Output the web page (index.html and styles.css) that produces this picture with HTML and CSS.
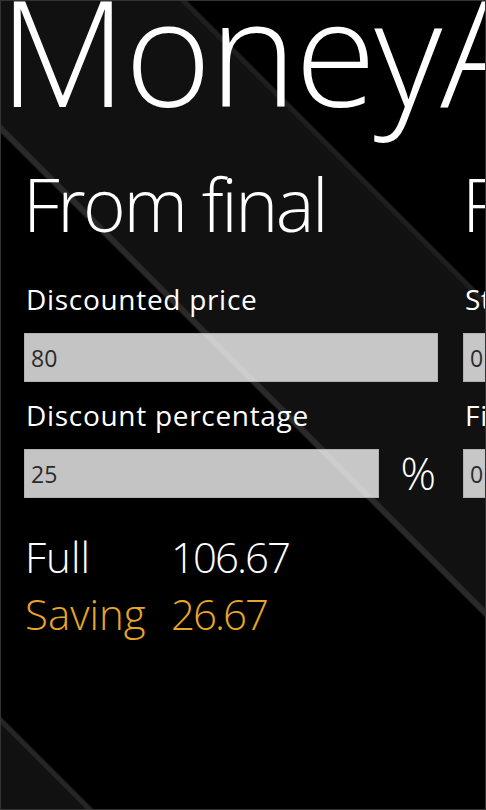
FILE: index.html
```html
<!DOCTYPE html>
<html lang="en">
<head>
<meta charset="utf-8">
<title>MoneyApp</title>
<link rel="stylesheet" href="styles.css">
</head>
<body>
<div class="screen">
  <h1 class="app-title">MoneyApp</h1>
  <div class="panorama">
    <section class="panel">
      <h2 class="panel-title">From final</h2>
      <label class="field-label" for="discounted">Discounted price</label>
      <div class="input-row">
        <input class="field-input" id="discounted" type="text" value="80">
      </div>
      <label class="field-label" for="percent">Discount percentage</label>
      <div class="input-row with-unit">
        <input class="field-input" id="percent" type="text" value="25">
        <span class="unit">%</span>
      </div>
      <div class="results">
        <span class="res-label">Full</span><span class="res-value">106.67</span>
        <span class="res-label accent">Saving</span><span class="res-value accent">26.67</span>
      </div>
    </section>
    <section class="panel">
      <h2 class="panel-title">From full</h2>
      <label class="field-label" for="start">Starting price</label>
      <div class="input-row">
        <input class="field-input" id="start" type="text" value="0">
      </div>
      <label class="field-label" for="final">Final price</label>
      <div class="input-row">
        <input class="field-input" id="final" type="text" value="0">
      </div>
    </section>
  </div>
</div>
</body>
</html>
```
FILE: styles.css
```css
* { box-sizing: border-box; }

html, body {
  margin: 0;
  padding: 0;
  background: #000;
}

.screen {
  width: 486px;
  height: 810px;
  overflow: hidden;
  border: 1px solid #333;
  color: #fff;
  font-family: "Open Sans", "Noto Sans", sans-serif;
  background: linear-gradient(45deg,
    #111 0px, #111 59px, #262626 61px, #262626 64px, #000 66px,
    #000 477px, #2a2a2a 479px, #2a2a2a 483px, #111 485px,
    #111 697px, #1f1f1f 699px, #1f1f1f 702px, #000 704px);
}

.app-title {
  margin: -25px 0 0 -2px;
  font-size: 148px;
  line-height: 148px;
  font-weight: 300;
  white-space: nowrap;
  letter-spacing: -2px;
}

.panorama {
  display: flex;
  gap: 25px;
  padding-left: 23px;
  margin-top: 40px;
}

.panel {
  flex: 0 0 414px;
}

.panel-title {
  margin: 0 0 0 -1px;
  font-size: 73px;
  line-height: 80px;
  font-weight: 300;
  white-space: nowrap;
  letter-spacing: -2.5px;
}

.field-label {
  display: block;
  margin: 0 0 18px 2px;
  font-size: 28px;
  line-height: 32px;
  letter-spacing: 0.7px;
  white-space: nowrap;
}

.panel-title + .field-label {
  margin-top: 39px;
}

.input-row + .field-label {
  margin-top: 17px;
}

.input-row {
  display: grid;
  grid-template-columns: 1fr;
}

.input-row.with-unit {
  grid-template-columns: 1fr 59px;
}

.field-input {
  display: block;
  width: 100%;
  height: 49px;
  margin: 0;
  padding: 0 0 0 6px;
  border: 1px solid #b2b2b2;
  border-radius: 0;
  background: rgba(255, 255, 255, 0.77);
  color: #2b2b2b;
  font-family: "Open Sans", "Noto Sans", sans-serif;
  font-size: 23px;
  outline: none;
}

.unit {
  font-size: 44px;
  font-weight: 300;
  line-height: 49px;
  text-align: right;
  padding-right: 2px;
}

.results {
  display: grid;
  grid-template-columns: 146px auto;
  margin-top: 30px;
  margin-left: 1px;
  font-size: 42px;
  line-height: 57px;
  font-weight: 300;
}

.res-value {
  letter-spacing: -2px;
}

.accent {
  color: #e6a628;
}
```
